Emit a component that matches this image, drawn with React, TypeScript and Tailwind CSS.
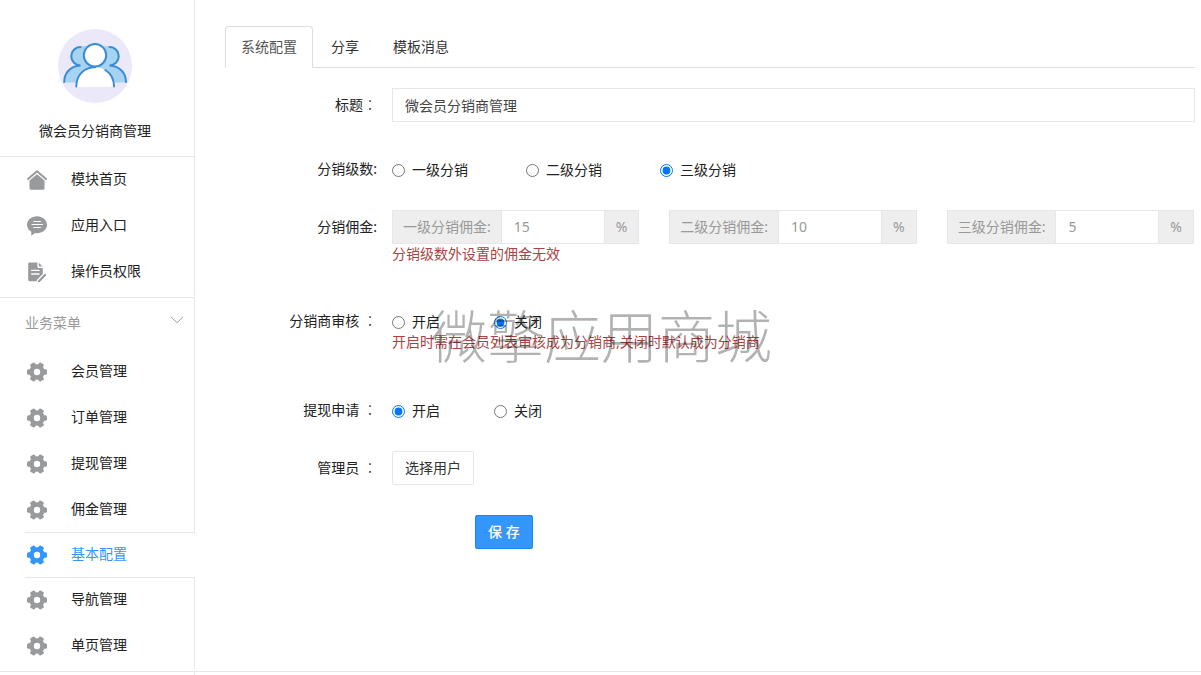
import { useState } from "react";
import type { ReactNode } from "react";
import clsx from "clsx";

const HomeIcon = () => (
  <svg width="20" height="20" viewBox="0 0 20 20" fill="none" aria-hidden="true">
    <path d="M1 9 10 1.2 19 9" stroke="currentColor" strokeWidth="2" strokeLinecap="round" strokeLinejoin="round" />
    <path d="M10 4.2l7.500 6.400v7.600a1.600 1.600 0 0 1-1.600 1.600H4.100a1.600 1.600 0 0 1-1.600-1.600v-7.600z" fill="currentColor" />
  </svg>
);

const ChatIcon = () => (
  <svg width="20" height="20" viewBox="0 0 20 20" fill="none" aria-hidden="true">
    <path
      d="M10 .3c5.600 0 10 3.700 10 8.500s-4.400 8.500-10 8.500c-.7 0-1.300 0-1.900-.2L4.300 19.800v-4C1.700 14.300 0 11.700 0 8.800 0 4 4.400.3 10 .3z"
      fill="currentColor"
    />
    <path d="M6.800 5.500h6.600M5 8.500h10.400M6.800 11.500h6.600" stroke="#fff" strokeWidth="1.200" strokeLinecap="round" />
  </svg>
);

const DocIcon = () => (
  <svg width="20" height="20" viewBox="0 0 20 20" fill="none" aria-hidden="true">
    <path
      d="M2.600.6h7.800v3.800c0 1 .6 1.600 1.600 1.600h3.800v6L9.800 18v1.200H2.600a1.400 1.400 0 0 1-1.400-1.400V2C1.200 1.200 1.800.6 2.600.6z"
      fill="currentColor"
    />
    <path d="M11.800.8l3.800 3.800h-3a.8.8 0 0 1-.8-.8z" fill="currentColor" />
    <path d="M4.600 8.400h7.400M4.600 12h7.400" stroke="#fff" strokeWidth="1.300" strokeLinecap="round" />
    <path d="M11.800 19.400l6.200-6.400" stroke="currentColor" strokeWidth="2.200" strokeLinecap="round" />
  </svg>
);

const GearIcon = () => (
  <svg width="20" height="20" viewBox="0 0 20 20" fill="currentColor" aria-hidden="true">
    <circle cx="10" cy="10" r="7.800" />
    <g stroke="currentColor" strokeWidth="3" strokeLinejoin="round">
      <path d="M1.500 8.800h17v2.400h-17z" />
      <path d="M1.500 8.800h17v2.400h-17z" transform="rotate(60 10 10)" />
      <path d="M1.500 8.800h17v2.400h-17z" transform="rotate(120 10 10)" />
    </g>
    <circle cx="10" cy="10" r="3.200" fill="#fff" />
  </svg>
);

const Avatar = () => (
  <svg width="74" height="74" viewBox="0 0 74 74" fill="none" aria-hidden="true">
    <circle cx="37" cy="37" r="37" fill="#ebe9f9" />
    <path d="M29 17h-6a9.500 9.500 0 0 0-2 19C12 37 6 44 6 53.600h62C68 44 62 37 53 36a9.500 9.500 0 0 0-2-19h-6z" fill="#a6d3f0" />
    <path d="M18.300 58C18.300 46 26 38.300 37 38.300S56 46 56 58z" fill="#fff" />
    <circle cx="37" cy="26.300" r="11.200" fill="#fff" />
    <g stroke="#3a8bd6" strokeWidth="2" strokeLinecap="round">
      <circle cx="37" cy="26.300" r="11.200" />
      <path d="M22.500 18a9.200 9.200 0 0 0 0 18.500C12.500 37 6.200 44 6.200 53" />
      <path d="M51.500 18a9.200 9.200 0 0 1 0 18.500C61.500 37 68 44 68 53" />
      <path d="M18.300 57.500C18.300 46 26 38.300 37 38.300M47.300 41C52.800 44.500 56 50 56 57.500" />
    </g>
  </svg>
);

const topMenu = [
  { title: "模块首页", icon: <HomeIcon /> },
  { title: "应用入口", icon: <ChatIcon /> },
  { title: "操作员权限", icon: <DocIcon /> },
];

const businessMenu = ["会员管理", "订单管理", "提现管理", "佣金管理", "基本配置", "导航管理", "单页管理"];
const tabs = ["系统配置", "分享", "模板消息"];
const levels = ["一级分销", "二级分销", "三级分销"];

const MenuItem = ({ title, icon, active }: { title: string; icon: ReactNode; active?: boolean }) => (
  <a
    href="#"
    className={clsx(
      "flex h-[46px] items-center pl-[2px]",
      active ? "-my-px border-y border-[#e7e7eb] text-[#3296fa]" : "border-r border-r-[#e7e7eb]",
    )}
  >
    <span className={active ? "" : "text-[#999a9c]"}>{icon}</span>
    <span className="pb-[2px] pl-6">{title}</span>
  </a>
);

const Sidebar = () => (
  <aside className="w-[195px] shrink-0 pb-[2px] text-[#222]">
    <div className="flex flex-col items-center border-r border-b border-[#e7e7eb] pt-[29px] pr-1 pb-[15px]">
      <Avatar />
      <div className="mt-[18px] leading-5">微会员分销商管理</div>
    </div>
    <nav className="border-b border-[#e7e7eb] pb-[2px]">
      {topMenu.map((item) => (
        <div key={item.title} className="pl-[25px]">
          <MenuItem title={item.title} icon={item.icon} />
        </div>
      ))}
    </nav>
    <button
      type="button"
      className="flex h-[51px] w-full items-center justify-between border-r border-[#e7e7eb] pr-[10px] pb-px pl-[25px] text-[#999]"
    >
      业务菜单
      <svg width="14" height="8" viewBox="0 0 14 8" className="mb-[6px]" fill="none" stroke="#999" aria-hidden="true">
        <path d="M1 .8l6 6 6-6" />
      </svg>
    </button>
    <nav className="pl-[25px]">
      {businessMenu.map((title) => (
        <MenuItem key={title} title={title} icon={<GearIcon />} active={title === "基本配置"} />
      ))}
    </nav>
  </aside>
);

const Row = ({ label, children, className }: { label: ReactNode; children: ReactNode; className?: string }) => (
  <div className={clsx("flex gap-[15px]", className)}>
    <div className="w-[152px] shrink-0 text-right leading-[18px]">{label}</div>
    <div className="min-w-0 flex-1">{children}</div>
  </div>
);

// full-width colon, centred in its box
const Colon = () => <span className="font-['Noto_Sans_CJK_TC',sans-serif] leading-none font-light">：</span>;

type RadiosProps = { name: string; options: string[]; value: string; onChange: (v: string) => void; gap: string };

const Radios = ({ name, options, value, onChange, gap }: RadiosProps) => (
  <div role="radiogroup" className={clsx("flex", gap)}>
    {options.map((option) => (
      <label key={option} className="flex items-center gap-[7px] leading-5">
        <input
          type="radio"
          name={name}
          className="m-0 size-[13px]"
          checked={value === option}
          onChange={() => onChange(option)}
        />
        {option}
      </label>
    ))}
  </div>
);

const App = () => {
  const [tab, setTab] = useState("系统配置");
  const [level, setLevel] = useState("三级分销");
  const [audit, setAudit] = useState("关闭");
  const [withdraw, setWithdraw] = useState("开启");
  const [rates, setRates] = useState(["15", "10", "5"]);

  return (
    <div className="flex min-h-screen flex-col bg-white font-['Noto_Sans','Noto_Sans_CJK_SC',sans-serif] text-sm text-[#222]">
      <div className="flex">
        <Sidebar />
        <main className="min-w-0 flex-1 pt-[26px] pr-[6px] pl-[30px]">
          <div role="tablist" className="flex gap-[2px] border-b border-[#ddd]">
            {tabs.map((item) => (
              <button
                key={item}
                type="button"
                role="tab"
                aria-selected={tab === item}
                onClick={() => setTab(item)}
                className={clsx(
                  "-mb-px h-[42px] rounded-t border px-[15px]",
                  tab === item ? "border-[#ddd] border-b-white bg-white text-[#555]" : "border-transparent text-[#333]",
                )}
              >
                {item}
              </button>
            ))}
          </div>

          <form className="pt-5" onSubmit={(e) => e.preventDefault()}>
            <Row label={<label htmlFor="title" className="block pt-2">标题<Colon /></label>}>
              <input
                id="title"
                type="text"
                defaultValue="微会员分销商管理"
                className="block h-[34px] w-full border border-[#e7e7eb] px-3 text-[#444] outline-none"
              />
            </Row>

            <Row label="分销级数:" className="mt-[38px]">
              <Radios name="level" options={levels} value={level} onChange={setLevel} gap="gap-[58px]" />
            </Row>

            <Row label={<div className="pt-2">分销佣金:</div>} className="mt-[30px]">
              <div className="grid grid-cols-3 gap-[30px] pr-px text-[#999]">
                {levels.map((item, i) => (
                  <div key={item} className="flex h-[34px] border border-[#e7e7eb] bg-[#eee]">
                    <label htmlFor={`rate-${i}`} className="flex shrink-0 items-center px-[10px]">
                      {item}佣金:
                    </label>
                    <input
                      id={`rate-${i}`}
                      type="text"
                      value={rates[i]}
                      onChange={(e) => setRates(rates.map((r, n) => (n === i ? e.target.value : r)))}
                      className="min-w-0 flex-1 border-x border-[#e7e7eb] bg-white px-3 outline-none"
                    />
                    <span className="flex items-center px-[11px]">%</span>
                  </div>
                ))}
              </div>
              <p className="leading-5 text-[#a94442]">分销级数外设置的佣金无效</p>
            </Row>

            <Row label={<>分销商审核 <Colon /></>} className="mt-12">
              <div className="relative">
                <Radios name="audit" options={["开启", "关闭"]} value={audit} onChange={setAudit} gap="gap-[54px]" />
                <p className="leading-5 text-[#a94442]">开启时需在会员列表审核成为分销商,关闭时默认成为分销商</p>
                <div className="pointer-events-none absolute -top-[11px] left-[38px] font-['Noto_Sans_CJK_SC',sans-serif] text-[57px] leading-[64px] font-light whitespace-nowrap text-black/30">
                  微擎应用商城
                </div>
              </div>
            </Row>

            <Row label={<>提现申请 <Colon /></>} className="mt-[49px]">
              <Radios name="withdraw" options={["开启", "关闭"]} value={withdraw} onChange={setWithdraw} gap="gap-[54px]" />
            </Row>

            <Row label={<div className="pt-2">管理员 <Colon /></div>} className="mt-[30px]">
              <button type="button" className="h-[34px] rounded-xs border border-[#e7e7eb] px-3 text-[#333]">
                选择用户
              </button>
            </Row>

            <div className="mt-[30px] pl-[250px]">
              <button
                type="submit"
                className="h-[34px] rounded-xs border border-[#1b86f8] bg-[#3296fa] px-3 font-medium text-white"
              >
                保 存
              </button>
            </div>
          </form>
        </main>
      </div>
      <div className="flex-1 border-t border-[#e7e7eb]">
        <div className="h-[3px] w-[195px] border-r border-[#e7e7eb]" />
      </div>
    </div>
  );
};

export default App;
